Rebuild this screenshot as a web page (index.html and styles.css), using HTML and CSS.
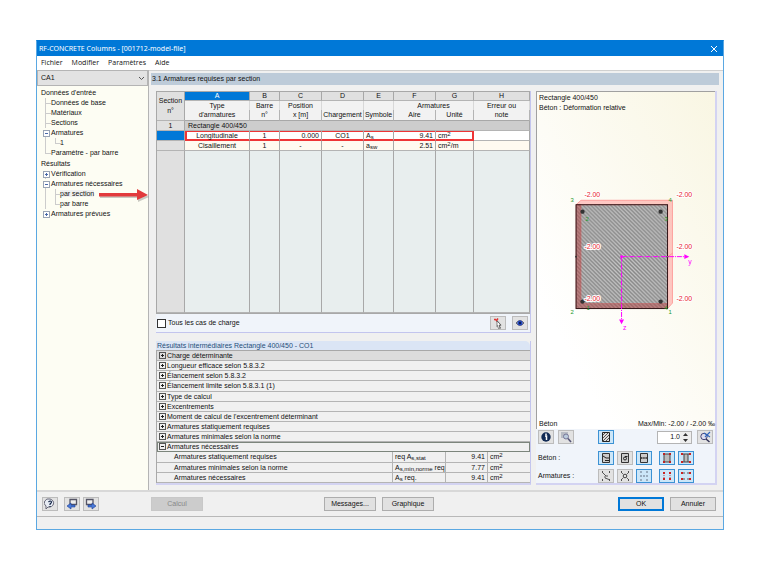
FILE: index.html
```
<!DOCTYPE html>
<html lang="fr">
<head>
    <meta charset="UTF-8">
    <meta name="viewport" content="width=device-width, initial-scale=1.0">
    <title>RF-CONCRETE Columns</title>
    <link rel="stylesheet" href="styles.css">
</head>
<body>
    <div class="window">
        <!-- Title bar -->
        <header class="titlebar">
            <span>RF-CONCRETE Columns - [001712-model-file]</span>
            <button class="close" aria-label="Fermer">
                <svg width="8" height="8" viewBox="0 0 8 8"><path d="M1 1l6 6M7 1l-6 6" stroke="#fff" fill="none"/></svg>
            </button>
        </header>

        <!-- Menu -->
        <nav class="menu">
            <button>Fichier</button>
            <button>Modifier</button>
            <button>Paramètres</button>
            <button>Aide</button>
        </nav>

        <div class="workspace">
            <!-- Navigator -->
            <aside class="sidebar">
                <select class="case" aria-label="Cas de calcul">
                    <option>CA1</option>
                </select>
                <div class="tree">
                    <div class="root">Données d'entrée</div>
                    <ul>
                        <li>Données de base</li>
                        <li>Matériaux</li>
                        <li>Sections</li>
                        <li class="minus">Armatures
                            <ul>
                                <li>1</li>
                            </ul>
                        </li>
                        <li>Paramètre - par barre</li>
                    </ul>
                    <div class="root">Résultats</div>
                    <ul>
                        <li class="plus">Vérification</li>
                        <li class="minus">Armatures nécessaires
                            <ul>
                                <li><span class="current">par section</span>
                                    <svg class="arrow" width="52" height="14" viewBox="0 0 52 14">
                                        <path d="M2 7h38V3l11 6-11 5v-4H2z" fill="#000" opacity=".2"/>
                                        <path d="M1 5h38V1l11 6-11 5V8.500H1z" fill="#e23a3c"/>
                                    </svg>
                                </li>
                                <li>par barre</li>
                            </ul>
                        </li>
                        <li class="plus">Armatures prévues</li>
                    </ul>
                </div>
            </aside>

            <main class="main">
                <h1 class="heading">3.1 Armatures requises par section</h1>
                <div class="columns">
                    <div class="left">
                        <!-- Required reinforcement -->
                        <section class="card">
                            <table class="grid">
                                <colgroup>
                                    <col class="w-section"><col class="w-type"><col class="w-small"><col class="w-medium"><col class="w-medium"><col class="w-small"><col class="w-medium"><col class="w-unit"><col>
                                </colgroup>
                                <thead>
                                    <tr class="letters">
                                        <th rowspan="3" class="corner">Section<br>n°</th>
                                        <th class="selected">A</th><th>B</th><th>C</th><th>D</th><th>E</th><th>F</th><th>G</th><th>H</th>
                                    </tr>
                                    <tr class="names">
                                        <th>Type</th><th>Barre</th><th>Position</th><th></th><th></th><th colspan="2">Armatures</th><th>Erreur ou</th>
                                    </tr>
                                    <tr class="names last">
                                        <th>d'armatures</th><th>n°</th><th>x [m]</th><th>Chargement</th><th>Symbole</th><th>Aire</th><th>Unité</th><th>note</th>
                                    </tr>
                                </thead>
                                <tbody>
                                    <tr class="group"><th>1</th><td colspan="8">Rectangle 400/450</td></tr>
                                    <tr class="marked">
                                        <th class="selected"></th><td>Longitudinale</td><td>1</td><td class="num">0.000</td><td>CO1</td>
                                        <td class="txt">A<sub>s</sub></td><td class="num">9.41</td><td class="txt">cm<sup>2</sup></td><td></td>
                                    </tr>
                                    <tr class="alt">
                                        <th></th><td>Cisaillement</td><td>1</td><td>-</td><td>-</td>
                                        <td class="txt">a<sub>sw</sub></td><td class="num">2.51</td><td class="txt">cm<sup>2</sup>/m</td><td></td>
                                    </tr>
                                    <tr class="filler"><th></th><td></td><td></td><td></td><td></td><td></td><td></td><td></td><td></td></tr>
                                </tbody>
                            </table>
                            <div class="options">
                                <label class="check"><input type="checkbox"> Tous les cas de charge</label>
                                <div class="tools">
                                    <button class="tool" aria-label="Sélectionner">
                                        <svg width="12" height="12" viewBox="0 0 12 12"><path d="M4.500 3.500l4 4.500-1.500.5 1.500 3" fill="none" stroke="#666" stroke-width="1.200"/><path d="M5 4l4 4H7l1 3-1.500.5-1-3L5 9.500z" fill="#fff" stroke="#555" stroke-width=".7"/><path d="M2 2.500h2M4 4l2-2.500" stroke="#d33" stroke-width="1.600"/></svg>
                                    </button>
                                    <button class="tool" aria-label="Afficher">
                                        <svg width="12" height="12" viewBox="0 0 12 12"><path d="M2 6q4-5 8 0q-4 5-8 0z" fill="#9ab" stroke="#667"/><circle cx="6" cy="6" r="2.500" fill="#24b"/><circle cx="6" cy="6" r="1" fill="#013"/></svg>
                                    </button>
                                </div>
                            </div>
                        </section>

                        <!-- Intermediate results -->
                        <section class="results">
                            <h2>Résultats intermédiaires Rectangle 400/450 - CO1</h2>
                            <table class="details">
                                <colgroup>
                                    <col><col class="w-symbol"><col class="w-value"><col class="w-cm">
                                </colgroup>
                                <tbody>
                                    <tr class="first"><td colspan="4"><i class="box plus"></i>Charge déterminante</td></tr>
                                    <tr><td colspan="4"><i class="box plus"></i>Longueur efficace selon 5.8.3.2</td></tr>
                                    <tr><td colspan="4"><i class="box plus"></i>Élancement selon 5.8.3.2</td></tr>
                                    <tr><td colspan="4"><i class="box plus"></i>Élancement limite selon 5.8.3.1 (1)</td></tr>
                                    <tr><td colspan="4"><i class="box plus"></i>Type de calcul</td></tr>
                                    <tr><td colspan="4"><i class="box plus"></i>Excentrements</td></tr>
                                    <tr><td colspan="4"><i class="box plus"></i>Moment de calcul de l'excentrement déterminant</td></tr>
                                    <tr><td colspan="4"><i class="box plus"></i>Armatures statiquement requises</td></tr>
                                    <tr><td colspan="4"><i class="box plus"></i>Armatures minimales selon la norme</td></tr>
                                    <tr class="open"><td colspan="4"><i class="box"></i>Armatures nécessaires</td></tr>
                                    <tr class="child"><td>Armatures statiquement requises</td><td>req A<sub>s,stat</sub></td><td class="num">9.41</td><td>cm<sup>2</sup></td></tr>
                                    <tr class="child"><td>Armatures minimales selon la norme</td><td>A<sub>s,min,norme</sub> req.</td><td class="num">7.77</td><td>cm<sup>2</sup></td></tr>
                                    <tr class="child"><td>Armatures nécessaires</td><td>A<sub>s</sub> req.</td><td class="num">9.41</td><td>cm<sup>2</sup></td></tr>
                                </tbody>
                            </table>
                        </section>
                    </div>

                    <!-- Cross-section preview -->
                    <section class="preview">
                        <div class="canvas">
                            <div class="caption">Rectangle 400/450<br>Béton : Déformation relative</div>
                            <svg class="figure" viewBox="0 0 180 160">
                                <defs>
                                    <pattern id="hatch" width="4" height="4" patternUnits="userSpaceOnUse">
                                        <rect width="4" height="4" fill="#c6c6c6"/>
                                        <path d="M-1 -1l6 6M-1 3l2 2M3 -1l2 2" stroke="#858585" stroke-width="1.500"/>
                                    </pattern>
                                </defs>
                                <rect x="39.500" y="26" width="92.500" height="105" fill="url(#hatch)"/>
                                <path d="M39.500 26l5-4.500H137v104l-5 5.500V26z" fill="#f66" fill-opacity=".35" stroke="#f77" stroke-width=".6"/>
                                <path d="M39.500 26h5v100H132v5H39.500z" fill="#b33" fill-opacity=".42" stroke="#c55" stroke-width=".5"/>
                                <path d="M132 79l5-4" stroke="#f77" stroke-width=".6"/>
                                <rect x="39.500" y="26" width="92.500" height="105" fill="none" stroke="#301518"/>
                                <g fill="#333">
                                    <circle cx="46" cy="33" r="2.200"/><circle cx="125" cy="33" r="2.200"/>
                                    <circle cx="46" cy="124" r="2.200"/><circle cx="125" cy="124" r="2.200"/>
                                    <circle cx="39.500" cy="78.500" r="1"/><circle cx="132" cy="78.500" r="1"/>
                                </g>
                                <g stroke="#f0f" fill="none" stroke-dasharray="5 1 1 1">
                                    <path d="M85.500 78.500H150M85.500 78.500V143"/>
                                </g>
                                <g fill="#f0f">
                                    <circle cx="85.500" cy="78.500" r="1.400"/>
                                    <path d="M149 76l5 2.500-5 2.500zM83 142h5l-2.500 5z"/>
                                    <text x="153" y="86">y</text><text x="87" y="153">z</text>
                                </g>
                                <g class="node">
                                    <text x="34" y="23">3</text><text x="133" y="23">4</text><text x="34" y="137">2</text><text x="133" y="137">1</text>
                                    <text x="49" y="42">2</text><text x="129" y="42">3</text><text x="50" y="132">1</text><text x="129" y="132">4</text>
                                </g>
                                <g class="strain">
                                    <text x="48" y="18">-2.00</text><text x="141" y="18">-2.00</text>
                                    <text x="48" y="71">-2.00</text><text x="141" y="71">-2.00</text>
                                    <text x="48" y="123">-2.00</text><text x="141" y="123">-2.00</text>
                                </g>
                            </svg>
                            <div class="legend"><span>Béton</span><span>Max/Min: -2.00 / -2.00 ‰</span></div>
                        </div>

                        <div class="controls">
                            <div class="row">
                                <div class="label tools">
                                    <button class="tool" aria-label="Info"><svg width="12" height="12" viewBox="0 0 12 12"><circle cx="6" cy="6" r="4.700" fill="#112a55"/><path d="M5 5h1.500v4M6 2.500v1.500" stroke="#fff" stroke-width="1.500" fill="none"/></svg></button>
                                    <button class="tool" aria-label="Loupe"><svg width="12" height="12" viewBox="0 0 12 12"><path d="M1 1h7v6H1z" fill="#b8bcc4"/><circle cx="6" cy="5.500" r="2.500" fill="#bcd" stroke="#779"/><path d="M8 7.500l3 3.500" stroke="#557" stroke-width="1.600"/></svg></button>
                                </div>
                                <button class="tool on" aria-label="Hachures"><svg width="12" height="12" viewBox="0 0 12 12"><path d="M2.500 1.500h7v9h-7z" fill="#ddd" stroke="#222"/><path d="M3 4l2-2M3 7l5-5M3 10l6-6M6 10l3-3" stroke="#333" stroke-width=".8"/></svg></button>
                                <div class="spinner">
                                    <input type="text" value="1.0" aria-label="Échelle">
                                    <button aria-label="Plus ou moins"><svg width="7" height="11" viewBox="0 0 7 11"><path d="M1 4l2.500-3L6 4zM1 7l2.500 3L6 7z" fill="#333"/></svg></button>
                                </div>
                                <button class="tool" aria-label="Vue entière"><svg width="12" height="12" viewBox="0 0 12 12"><circle cx="5" cy="5.500" r="3.200" fill="#dde" stroke="#447"/><path d="M7 8l3.500 3" stroke="#335" stroke-width="1.500"/><path d="M5 2l6 4M11 1L6 6" stroke="#36b" stroke-width="1.200"/></svg></button>
                            </div>
                            <div class="row">
                                <span class="label">Béton :</span>
                                <button class="tool on" aria-label="Béton : déformations"><svg width="12" height="12" viewBox="0 0 12 12"><path d="M2.500 1.500h7v9h-7z" fill="#ccc" stroke="#333"/><path d="M3 4l3 2h3M5 8.500h4" stroke="#222" fill="none"/></svg></button>
                                <button class="tool" aria-label="Béton : contraintes"><svg width="12" height="12" viewBox="0 0 12 12"><path d="M2.500 1.500h7v9h-7z" fill="#ccc" stroke="#333"/><circle cx="6" cy="6.500" r="1.500" fill="none" stroke="#222"/><path d="M6 4.500h2.500" stroke="#222"/></svg></button>
                                <button class="tool on" aria-label="Béton : valeurs"><svg width="12" height="12" viewBox="0 0 12 12"><path d="M2.500 1.500h7v9h-7z" fill="#ccc" stroke="#333"/><path d="M3 6h6" stroke="#222" stroke-width="1.500" stroke-dasharray="1.500 .7"/></svg></button>
                                <button class="tool on gap" aria-label="Béton : section"><svg width="12" height="12" viewBox="0 0 12 12"><path d="M3 2h6v8H3z" fill="#bbb" stroke="#444"/><path d="M2 1h2v2H2zM8 1h2v2H8zM2 9h2v2H2zM8 9h2v2H8z" fill="#b22"/></svg></button>
                                <button class="tool on" aria-label="Béton : dimensions"><svg width="12" height="12" viewBox="0 0 12 12"><path d="M4 2h4v8H4z" fill="#bbb"/><path d="M1 2h10M1 10h10M4 2v8M8 2v8" stroke="#444"/><path d="M1 1h2v2H1zM9 1h2v2H9zM1 9h2v2H1zM9 9h2v2H9z" fill="#c22"/></svg></button>
                            </div>
                            <div class="row">
                                <span class="label">Armatures :</span>
                                <button class="tool" aria-label="Armatures : déformations"><svg width="12" height="12" viewBox="0 0 12 12"><path d="M2 2h1M9 2h1M2 10h1M9 10h1" stroke="#222" stroke-width="1.500"/><path d="M3 3l3 3h2M5 6v2l4 1.500" fill="none" stroke="#555"/></svg></button>
                                <button class="tool" aria-label="Armatures : contraintes"><svg width="12" height="12" viewBox="0 0 12 12"><path d="M2 2h1M9 2h1M2 10h1M9 10h1" stroke="#222" stroke-width="1.500"/><circle cx="6" cy="6" r="1.800" fill="none" stroke="#444"/><path d="M3 3l1.500 1.500M7.500 7.500L9 9M9 3L7.500 4.500M3 9l1.500-1.500" stroke="#666"/></svg></button>
                                <button class="tool on" aria-label="Armatures : valeurs"><svg width="12" height="12" viewBox="0 0 12 12"><path d="M2 2h2M8 2h2M2 10h2M8 10h2M2 6h8" stroke="#89a" stroke-width="1.500" stroke-dasharray="2 1"/></svg></button>
                                <button class="tool on gap" aria-label="Armatures : barres"><svg width="12" height="12" viewBox="0 0 12 12"><path d="M2 2h2v2H2zM8 2h2v2H8zM2 8h2v2H2zM8 8h2v2H8z" fill="#c22"/><path d="M3 5v1M9 5v1M3 7v1M9 7v1" stroke="#a55"/></svg></button>
                                <button class="tool on" aria-label="Armatures : cotes"><svg width="12" height="12" viewBox="0 0 12 12"><path d="M1 2h2v2H1zM9 2h2v2H9zM1 8h2v2H1zM9 8h2v2H9z" fill="#c22"/><path d="M3 3h2M7 3h2M3 9h2M7 9h2" stroke="#555"/></svg></button>
                            </div>
                        </div>
                    </section>
                </div>
            </main>
        </div>

        <!-- Footer buttons -->
        <footer class="footer">
            <div class="start">
                <div class="nav-tools">
                    <button class="tool help" aria-label="Aide"><svg width="12" height="12" viewBox="0 0 12 12"><path d="M6 1a4.500 4 0 1 1-2 8l-2 2V8A4.500 4 0 0 1 6 1z" fill="#e8edf5" stroke="#667"/><path d="M4.500 4q2-2 3 0q0 1-1.500 2v1M6 8v1" fill="none" stroke="#124" stroke-width="1.200"/></svg></button>
                    <button class="tool" aria-label="Précédent"><svg width="12" height="12" viewBox="0 0 12 12"><path d="M4 1.500h6.500v5H4z" fill="#eee" stroke="#556" stroke-width="1.300"/><path d="M1 8l4-3v2h4v2H5v2z" fill="#4879d8" stroke="#1c3c94" stroke-width=".6"/></svg></button>
                    <button class="tool" aria-label="Suivant"><svg width="12" height="12" viewBox="0 0 12 12"><path d="M1.500 1.500H8v5H1.500z" fill="#eee" stroke="#556" stroke-width="1.300"/><path d="M11 8L7 5v2H3v2h4v2z" fill="#4879d8" stroke="#1c3c94" stroke-width=".6"/></svg></button>
                </div>
                <button class="btn" disabled>Calcul</button>
            </div>
            <div class="middle">
                <button class="btn">Messages...</button>
                <button class="btn">Graphique</button>
            </div>
            <div class="right">
                <button class="btn default">OK</button>
                <button class="btn">Annuler</button>
            </div>
        </footer>
        <div class="status"></div>
    </div>
</body>
</html>
```

FILE: styles.css
```
* {
    box-sizing: border-box;
}

body {
    margin: 0;
    padding: 40px 36px;
    min-height: 100vh;
    display: flex;
    background: #ffffff;
    color: #111111;
    font-family: "Liberation Sans", Arial, sans-serif;
    font-size: 7px;
    line-height: 10px;
}

button,
input,
select {
    font: inherit;
    color: inherit;
    margin: 0;
    padding: 0;
}

ul {
    list-style: none;
    margin: 0;
    padding: 0;
}

svg {
    display: block;
    flex: none;
}

sub,
sup {
    font-size: 6px;
    line-height: 0;
}

sub {
    vertical-align: -1px;
}

sup {
    vertical-align: 2px;
}

/* Window */
.window {
    flex: 1;
    display: flex;
    flex-direction: column;
    background: #f0f0f0;
    border: 1px solid #5ba8e2;
    border-top-color: #0078d7;
}

.titlebar {
    display: flex;
    justify-content: space-between;
    align-items: center;
    height: 15px;
    padding: 0 5px 0 2px;
    background: #0078d7;
    color: #ffffff;
    font-family: "Noto Sans", "Open Sans", sans-serif;
}

.close {
    border: none;
    background: none;
}

.menu {
    display: flex;
    gap: 9px;
    height: 14px;
    padding: 0 4px;
    background: #ffffff;
    font-family: "Open Sans", "Noto Sans", sans-serif;
}

.menu button {
    border: none;
    background: none;
}

.workspace {
    flex: 1;
    display: flex;
    border-bottom: 2px solid #d8d8d8;
}

/* Navigator */
.sidebar {
    width: 112px;
    border-right: 1px solid #b4b4b4;
    background: #fdfdf3;
}

.case {
    display: block;
    width: 100%;
    height: 16px;
    padding: 0 3px;
    border: 1px solid #b4b4b4;
    border-radius: 0;
    appearance: none;
    background: #e2e2e2 url("data:image/svg+xml,%3Csvg xmlns='http://www.w3.org/2000/svg' width='7' height='5'%3E%3Cpath d='M1 1l2.500 2.500L6 1' fill='none' stroke='%23555'/%3E%3C/svg%3E") no-repeat right 2px center;
}

.tree {
    padding: 2px 4px;
}

.tree > ul {
    margin-bottom: 1px;
}

.tree li {
    position: relative;
    padding-left: 10px;
}

.tree ul ul li {
    padding-left: 9px;
}

.tree li::before {
    content: "";
    position: absolute;
    left: 4px;
    top: 0;
    width: 5px;
    height: 5px;
    border-left: 1px solid #cccccc;
    border-bottom: 1px solid #cccccc;
}

.tree li:not(:last-child)::after {
    content: "";
    position: absolute;
    left: 4px;
    top: 5px;
    bottom: 0;
    border-left: 1px solid #cccccc;
}

.tree li.plus::before,
.tree li.minus::before {
    left: 2px;
    top: 2px;
    border: 1px solid #9aa5b5;
    background: linear-gradient(#4a6aa8, #4a6aa8) center / 3px 1px no-repeat #ffffff;
    z-index: 1;
}

.tree li.plus::before {
    background: linear-gradient(#4a6aa8, #4a6aa8) center / 3px 1px no-repeat, linear-gradient(#4a6aa8, #4a6aa8) center / 1px 3px no-repeat #ffffff;
}

.current {
    background: #f0f0f0;
}

.arrow {
    position: absolute;
    left: 47px;
    top: -1px;
    z-index: 2;
}

/* Main area */
.main {
    flex: 1;
    min-width: 0;
    padding: 2px 4px 4px 2px;
    border-top: 1px solid #d0d0d0;
}

.heading {
    margin: 0;
    padding: 0 1px;
    background: #bdcbd9;
    font-size: 7px;
    font-weight: normal;
    line-height: 12px;
}

.columns {
    display: flex;
    gap: 5px;
    padding: 6px 2px 0 5px;
}

.left {
    flex: 1;
    min-width: 0;
    display: flex;
    flex-direction: column;
    gap: 8px;
}

.card {
    border-right: 1px solid #c3c5ee;
    border-bottom: 1px solid #c3c5ee;
    background: #f0f4fa;
}

/* Reinforcement grid */
table {
    width: 100%;
    table-layout: fixed;
    border-collapse: separate;
    border-spacing: 0;
}

th,
td {
    padding: 0;
    font-weight: normal;
    line-height: 9px;
    white-space: nowrap;
    overflow: hidden;
}

.grid {
    border: 1px solid #a8a8a8;
    border-right: none;
    text-align: center;
}

.w-section {
    width: 28px;
}

.w-type {
    width: 65px;
}

.w-small {
    width: 30px;
}

.w-medium {
    width: 42px;
}

.w-unit {
    width: 38px;
}

.grid th,
.grid td {
    border-right: 1px solid #a8a8a8;
    border-bottom: 1px solid #b4b4b4;
}

.grid th {
    background: #f2f2f2;
}

.grid .letters th,
.grid tbody th {
    background: #e0e0e0;
}

.grid .letters th {
    line-height: 8px;
}

.grid .letters .corner {
    line-height: 10px;
}

.grid .names th {
    border-bottom: none;
    border-right-color: #d8d8d8;
    line-height: 9px;
}

.grid .names.last th {
    border-bottom: 1px solid #a8a8a8;
    border-right-color: #b4b4b4;
    line-height: 10px;
}

.grid th.selected.selected {
    background: #0078d7;
    color: #ffffff;
}

.grid .group td {
    background: #cdcdcd;
    text-align: left;
    padding-left: 3px;
}

.grid .num,
.details .num {
    text-align: right;
    padding-right: 2px;
}

.grid .txt {
    text-align: left;
    padding-left: 2px;
}

.marked td {
    background: #ffffff;
    box-shadow: inset 0 1px #ee3536, inset 0 -1px #ee3536;
}

.grid .marked td {
    border-bottom-color: #ee3536;
}

.marked td:nth-child(2) {
    box-shadow: inset 2px 1px #ee3536, inset 0 -1px #ee3536;
}

.marked td:nth-child(8) {
    box-shadow: inset -1px 1px #ee3536, inset 0 -1px #ee3536;
}

.grid .marked td:nth-child(8) {
    border-right-color: #ee3536;
}

.grid .marked td:nth-child(9) {
    box-shadow: none;
    border-bottom-color: #b4b4b4;
}

.alt td {
    background: #fffaf0;
}

.filler td {
    height: 162px;
    background: #e8eeee;
}

.options {
    display: flex;
    justify-content: space-between;
    align-items: center;
    padding: 2px 2px 2px 1px;
}

.check {
    display: flex;
    align-items: center;
    gap: 2px;
}

.check input {
    appearance: none;
    width: 9px;
    height: 9px;
    border: 1px solid #333333;
    background: #ffffff;
}

.options .tools {
    gap: 6px;
}

.tools {
    display: flex;
    gap: 4px;
}

.tool {
    display: flex;
    align-items: center;
    justify-content: center;
    width: 16px;
    height: 14px;
    border: 1px solid #bcbcbc;
    background: #e2e2e2;
}

.tool.on {
    border-color: #3c92d4;
    background: #cce6f8;
}

/* Intermediate results */
.results {
    border-right: 1px solid #c3c5ee;
    border-bottom: 2px solid #d3d3f2;
}

.results h2 {
    margin: 0;
    padding-left: 1px;
    background: #dbe5f5;
    border-top-right-radius: 5px;
    color: #1f4e79;
    font-size: 7px;
    font-weight: normal;
    line-height: 9px;
}

.details {
    height: 133px;
    border: 1px solid #a8a8a8;
    border-right: none;
    border-bottom: none;
}

.details td {
    border-bottom: 1px solid #b4b4b4;
    padding-left: 2px;
}

.details .first td {
    background: #dcdcdc;
}

.details .open td {
    border: 1px solid #7c857c;
    padding-left: 1px;
    line-height: 8px;
}

.details .child td {
    border-right: 1px solid #b4b4b4;
}

.details .child td:first-child {
    padding-left: 17px;
}

.details .child td:last-child {
    border-right: none;
}

.w-symbol {
    width: 53px;
}

.w-value {
    width: 42px;
}

.w-cm {
    width: 42px;
}

.box {
    display: inline-block;
    width: 7px;
    height: 7px;
    margin-right: 1px;
    border: 1px solid #555555;
    vertical-align: -1px;
    background: linear-gradient(#222222, #222222) center / 3px 1px no-repeat;
}

.box.plus {
    background: linear-gradient(#222222, #222222) center / 3px 1px no-repeat, linear-gradient(#222222, #222222) center / 1px 3px no-repeat;
}

/* Preview */
.preview {
    width: 181px;
    display: flex;
    flex-direction: column;
    border-right: 2px solid #d3d3f2;
    border-bottom: 2px solid #d3d3f2;
    background: #f0f4fa;
}

.canvas {
    flex: 1;
    display: flex;
    flex-direction: column;
    justify-content: space-between;
    border: 1px solid #a0a0a0;
    border-right: none;
    border-bottom: none;
    background: linear-gradient(to top right, #ffffff 20%, #f9f6e3);
}

.caption {
    padding: 1px 2px;
}

.figure {
    width: 100%;
    margin-bottom: 16px;
    font-size: 7px;
}

.node {
    fill: #1c9a2c;
    font-size: 6px;
}

.strain {
    fill: #e8222e;
    stroke: #ffffff;
    stroke-width: 2px;
    paint-order: stroke;
}

.legend {
    display: flex;
    justify-content: space-between;
    padding-left: 2px;
}

.controls {
    display: flex;
    flex-direction: column;
    gap: 4px;
    padding: 1px 2px 0;
}

.row {
    display: flex;
    align-items: center;
    gap: 3px;
}

.row .label {
    width: 57px;
}

.row .gap {
    margin-left: 4px;
}

.row:first-child {
    margin-bottom: 3px;
}

.spinner {
    display: flex;
    width: 35px;
    height: 13px;
    margin-left: auto;
    margin-right: 2px;
    border: 1px solid #b4b4b4;
    background: #ffffff;
}

.spinner input {
    flex: 1;
    min-width: 0;
    border: none;
    text-align: right;
    background: none;
}

.spinner button {
    width: 11px;
    border: none;
    background: #eeeeee;
    display: flex;
    align-items: center;
    justify-content: center;
}

/* Footer */
.footer {
    display: flex;
    align-items: center;
    height: 25px;
    padding: 0 7px 0 5px;
    border-bottom: 1px solid #b8b8b8;
}

.start {
    flex: 1;
    display: flex;
}

.nav-tools {
    display: flex;
    gap: 3px;
    width: 109px;
}

.help {
    margin-right: 3px;
}

.btn {
    width: 52px;
    height: 14px;
    border: 1px solid #adadad;
    background: #e1e1e1;
}

.btn:disabled {
    border-color: #c8c8c8;
    background: #cccccc;
    color: #888888;
}

.btn.default {
    border: 1px solid #0078d7;
    outline: 1px solid #0078d7;
    outline-offset: -2px;
}

.middle,
.right {
    display: flex;
    gap: 6px;
}

.right {
    flex: 1;
    justify-content: flex-end;
}

.right .btn {
    width: 46px;
}

.status {
    height: 12px;
}
```
